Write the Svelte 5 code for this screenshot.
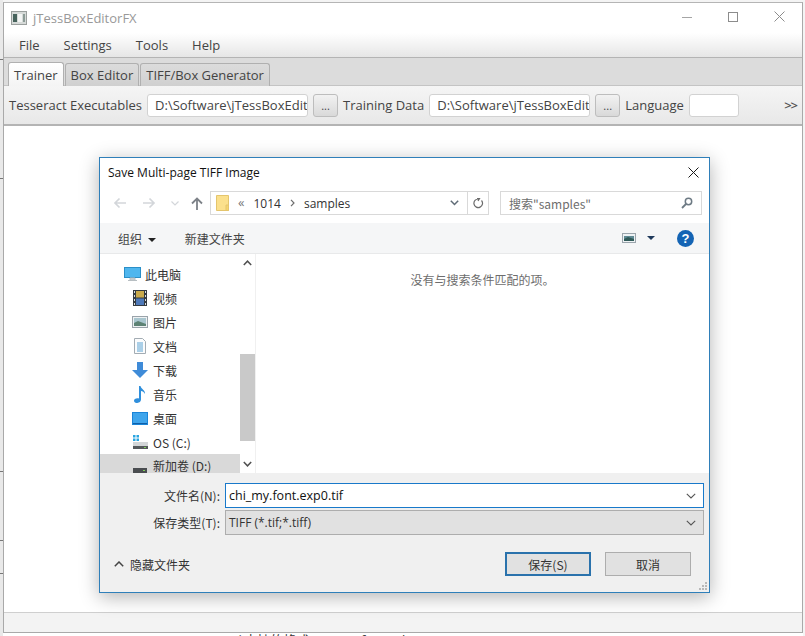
<script>
  const menus = ['File', 'Settings', 'Tools', 'Help']
  const tabs = ['Trainer', 'Box Editor', 'TIFF/Box Generator']
  const places = [
    { name: '视频', icon: 'video' },
    { name: '图片', icon: 'picture' },
    { name: '文档', icon: 'doc' },
    { name: '下载', icon: 'down' },
    { name: '音乐', icon: 'music' },
    { name: '桌面', icon: 'desk' },
    { name: 'OS (C:)', icon: 'os' },
    { name: '新加卷 (D:)', icon: 'drive', selected: true }
  ]
</script>

<div class="screen">
  <div class="edge">
    <i style="top:59px"></i><i style="top:178px"></i><i style="top:471px"></i><i style="top:540px"></i><i style="top:573px"></i>
  </div>
  <main class="win">
    <header class="titlebar">
      <svg class="appicon" width="16" height="14" viewBox="0 0 16 14">
        <rect x="0.5" y="0.5" width="15" height="13" fill="#d6dad8" stroke="#9a9f9d" />
        <rect x="2" y="3" width="4" height="8" fill="#47635c" />
        <rect x="7" y="3" width="4" height="8" fill="#f3f5f4" />
        <rect x="12" y="3" width="2" height="8" fill="#8b9b96" />
      </svg>
      <span class="apptitle">jTessBoxEditorFX</span>
      <div class="winbtns">
        <svg width="10" height="10" viewBox="0 0 10 10"><path d="M0 5.5h10" stroke="#a5a5a5" /></svg>
        <svg width="10" height="10" viewBox="0 0 10 10"><rect x="0.5" y="0.5" width="9" height="9" fill="none" stroke="#8c8c8c" /></svg>
        <svg width="11" height="11" viewBox="0 0 11 11"><path d="M.5.5l10 10M10.5.5l-10 10" stroke="#8c8c8c" fill="none" /></svg>
      </div>
    </header>
    <nav class="menubar">
      {#each menus as m}<span class="menu">{m}</span>{/each}
    </nav>
    <div class="tabstrip">
      {#each tabs as t, i}<span class="tab" class:active={i === 0}>{t}</span>{/each}
    </div>
    <div class="toolbar">
      <span>Tesseract Executables</span>
      <span class="field">D:\Software\jTessBoxEdito</span>
      <span class="dots">...</span>
      <span>Training Data</span>
      <span class="field">D:\Software\jTessBoxEdito</span>
      <span class="dots">...</span>
      <span>Language</span>
      <span class="field lang"></span>
      <span class="more">&gt;&gt;</span>
    </div>
    <div class="content"></div>
    <div class="status"></div>
  </main>
  <div class="peek"><span>✓ 支持的格式：.jpg .gif .png .bmp</span></div>

  <section class="dialog">
    <div class="dlgtitle">
      <span>Save Multi-page TIFF Image</span>
      <svg width="11" height="11" viewBox="0 0 11 11"><path d="M.5.5l10 10M10.5.5l-10 10" stroke="#1a1a1a" fill="none" /></svg>
    </div>
    <div class="navrow">
      <svg class="arrow" width="14" height="12" viewBox="0 0 14 12"><path d="M13 6H2M6.500 1.500L2 6l4.500 4.500" stroke="#d3d6da" stroke-width="1.700" fill="none" /></svg>
      <svg class="arrow fwd" width="14" height="12" viewBox="0 0 14 12"><path d="M1 6h11M7.500 1.500L12 6l-4.500 4.500" stroke="#d3d6da" stroke-width="1.700" fill="none" /></svg>
      <svg class="arrow small" width="8" height="5" viewBox="0 0 8 5"><path d="M.5.5L4 4 7.500.5" stroke="#d3d6da" stroke-width="1.200" fill="none" /></svg>
      <svg class="arrow up" width="12" height="13" viewBox="0 0 12 13"><path d="M6 13V2M1 6.500L6 1.500l5 5" stroke="#7d8288" stroke-width="1.800" fill="none" /></svg>
      <div class="address">
        <svg class="folder" width="13" height="16" viewBox="0 0 13 16">
          <path d="M.5.500h12v15H.5z" fill="#fbe08c" stroke="#e4c56d" />
          <path d="M10 10h2.500v5.500H10z" fill="#f6d56f" stroke="#e4c56d" />
        </svg>
        <span class="chev">«</span>
        <span>1014</span>
        <svg width="5" height="8" viewBox="0 0 5 8"><path d="M1 .8L4 4 1 7.200" stroke="#6d6d6d" stroke-width="1.200" fill="none" /></svg>
        <span>samples</span>
        <svg class="addrdown" width="9" height="6" viewBox="0 0 9 6"><path d="M.8.800L4.500 4.500 8.200.8" stroke="#5f6b76" stroke-width="1.500" fill="none" /></svg>
        <span class="refresh">
          <svg width="11" height="13" viewBox="0 0 11 13"><path d="M4 1.500h2.500L5 4M8.500 3.500a4.300 4.300 0 1 1-3-1.500" stroke="#6b6b6b" stroke-width="1.200" fill="none" /></svg>
        </span>
      </div>
      <div class="search">
        <span>搜索"samples"</span>
        <svg width="12" height="12" viewBox="0 0 12 12"><circle cx="7.500" cy="4.500" r="3.200" fill="none" stroke="#6d7a84" stroke-width="1.500" /><path d="M5 7L1 11" stroke="#6d7a84" stroke-width="1.800" /></svg>
      </div>
    </div>
    <div class="cmdbar">
      <span class="cmd">组织 <b class="caret"></b></span>
      <span class="cmd newf">新建文件夹</span>
      <span class="cmdright">
        <svg width="14" height="10" viewBox="0 0 14 10"><rect x=".5" y=".5" width="13" height="9" fill="#eef2f4" stroke="#9ba5ac" /><path d="M2 3h10v5H2z" fill="#5f8a94" /><path d="M2 6l4-2 6 2v2H2z" fill="#2f5a58" /></svg>
        <b class="caret dark"></b>
        <svg class="help" width="17" height="17" viewBox="0 0 17 17"><circle cx="8.500" cy="8.500" r="8.500" fill="#1464b4" /><text x="8.500" y="13" text-anchor="middle" font-size="13" font-weight="700" fill="#fff" font-family="Liberation Sans, sans-serif">?</text></svg>
      </span>
    </div>
    <div class="browser">
      <div class="tree">
        <div class="row pc">
          <svg width="17" height="15" viewBox="0 0 17 15"><rect x=".5" y=".5" width="16" height="10" fill="#4fb6ee" stroke="#2a8fc8" /><path d="M6 11h5v2H6zM4 13.500h9" fill="#cfd5d8" stroke="#b7bec2" /></svg>
          <span>此电脑</span>
        </div>
        {#each places as p}
          <div class="row" class:sel={p.selected}>
            <span class="ico">
              {#if p.icon === 'video'}
                <svg width="14" height="16" viewBox="0 0 14 16"><rect width="14" height="16" fill="#33393f" /><rect x="3" y="1" width="8" height="6.500" fill="#c9a94a" /><rect x="3" y="8.500" width="8" height="6.500" fill="#4d78b8" /><path d="M1 1h1v2H1zM1 5h1v2H1zM1 9h1v2H1zM1 13h1v2H1zM12 1h1v2h-1zM12 5h1v2h-1zM12 9h1v2h-1zM12 13h1v2h-1z" fill="#d8dce0" /></svg>
              {:else if p.icon === 'picture'}
                <svg width="16" height="12" viewBox="0 0 16 12"><rect x=".5" y=".5" width="15" height="11" fill="#eef1f3" stroke="#9aa3aa" /><rect x="2" y="2" width="12" height="8" fill="#a9c6cf" /><path d="M2 7l4-2 8 3v2H2z" fill="#5d8274" /></svg>
              {:else if p.icon === 'doc'}
                <svg width="12" height="16" viewBox="0 0 12 16"><path d="M.5.500h8l3 3v12H.5z" fill="#fbfcfd" stroke="#a3acb3" /><path d="M3 5h6M3 7h6M3 9h6M3 11h6M3 13h6" stroke="#5aa3d3" /></svg>
              {:else if p.icon === 'down'}
                <svg width="16" height="16" viewBox="0 0 16 16"><path d="M5 0h6v8h5l-8 8-8-8h5z" fill="#3f8bd8" /></svg>
              {:else if p.icon === 'music'}
                <svg width="12" height="17" viewBox="0 0 12 17"><path d="M5 0h1.500c.5 3 5 4 4.500 8-1-2-2.500-3-4-3v8.500C7 16 4.500 17 2.500 17 1 17 0 16 0 14.800 0 13 2 12 5 12.500z" fill="#2f8fdc" /></svg>
              {:else if p.icon === 'desk'}
                <svg width="16" height="13" viewBox="0 0 16 13"><rect width="16" height="13" fill="#1a84d8" /><rect x="1" y="1" width="14" height="10" fill="#3fa5ec" /><path d="M1 11h14v1H1z" fill="#0f5fa8" /></svg>
              {:else if p.icon === 'os'}
                <svg width="15" height="14" viewBox="0 0 15 14"><path d="M0 0h2.500v2.500H0zM3.500 0H6v2.500H3.500zM0 3.500h2.500V6H0zM3.500 3.500H6V6H3.500z" fill="#2aa5e0" /><rect y="7" width="15" height="7" fill="#d3d6d8" /><rect y="11" width="15" height="3" fill="#55595c" /><rect x="11" y="12" width="2" height="1" fill="#7fd05a" /></svg>
              {:else}
                <svg width="14" height="6" viewBox="0 0 14 6"><rect width="14" height="6" fill="#4a4d50" /><rect x="10" y="2" width="2" height="1" fill="#7fd05a" /></svg>
              {/if}
            </span>
            <span>{p.name}</span>
          </div>
        {/each}
      </div>
      <div class="sbar">
        <svg width="9" height="6" viewBox="0 0 9 6"><path d="M.8 5L4.500 1.200 8.200 5" stroke="#505050" stroke-width="1.500" fill="none" /></svg>
        <div class="thumbtrack"><div class="thumb"></div></div>
        <svg width="9" height="6" viewBox="0 0 9 6"><path d="M.8 1L4.500 4.800 8.200 1" stroke="#505050" stroke-width="1.500" fill="none" /></svg>
      </div>
      <div class="files">没有与搜索条件匹配的项。</div>
    </div>
    <div class="dlgfoot">
      <div class="formrow">
        <label for="fname">文件名(N):</label>
        <div class="combo focus">
          <input id="fname" value="chi_my.font.exp0.tif" />
          <svg width="10" height="6" viewBox="0 0 10 6"><path d="M.8.800L5 5 9.200.8" stroke="#555" stroke-width="1.100" fill="none" /></svg>
        </div>
      </div>
      <div class="formrow">
        <span class="lbl">保存类型(T):</span>
        <div class="combo grey">
          <span>TIFF (*.tif;*.tiff)</span>
          <svg width="10" height="6" viewBox="0 0 10 6"><path d="M.8.800L5 5 9.200.8" stroke="#555" stroke-width="1.100" fill="none" /></svg>
        </div>
      </div>
      <div class="actions">
        <span class="hide">
          <svg width="10" height="6" viewBox="0 0 10 6"><path d="M.8 5.200L5 1l4.200 4.200" stroke="#444" stroke-width="1.500" fill="none" /></svg>
          隐藏文件夹
        </span>
        <button class="btn default">保存(S)</button>
        <button class="btn">取消</button>
      </div>
      <svg class="grip" width="10" height="10" viewBox="0 0 10 10"><path d="M7 0h2v2H7zM4 3h2v2H4zM7 3h2v2H7zM1 6h2v2H1zM4 6h2v2H4zM7 6h2v2H7z" fill="#b8b8b8" /></svg>
    </div>
  </section>
</div>

<style>
  :global(body) {
    margin: 0;
    background: #fff;
  }
  .screen {
    position: relative;
    width: 805px;
    height: 636px;
    overflow: hidden;
    font-family: "Open Sans", "Noto Sans CJK SC", sans-serif;
    font-size: 13px;
    color: #333;
    background: #f4f4f4;
  }
  .edge {
    position: absolute;
    left: 0;
    top: 0;
    width: 3px;
    height: 636px;
    background: #e9e9e9;
  }
  .edge i {
    position: absolute;
    left: 0;
    width: 3px;
    height: 1px;
    background: #777;
  }
  .win {
    margin: 2px 2px 0 3px;
    height: 631px;
    box-sizing: border-box;
    border: 1px solid #a9a9a9;
    border-top-color: #b5b5b5;
    border-left-width: 1px;
    background: #fff;
    display: flex;
    flex-direction: column;
  }
  .titlebar {
    height: 30px;
    flex: none;
    display: flex;
    align-items: center;
    padding-left: 7px;
    background: #fff;
  }
  .appicon {
    margin-right: 6px;
  }
  .apptitle {
    font-size: 13px;
    color: #999;
  }
  .winbtns {
    margin-left: auto;
    display: flex;
    align-items: center;
    gap: 36px;
    padding-right: 17px;
    padding-bottom: 3px;
  }
  .menubar {
    height: 24px;
    flex: none;
    display: flex;
    align-items: center;
    gap: 24px;
    padding-left: 15px;
    background: linear-gradient(#fff, #e6e6e6);
    border-bottom: 1px solid #b4b4b4;
    color: #444;
  }
  .tabstrip {
    height: 28px;
    flex: none;
    box-sizing: border-box;
    background: #dcdcdc;
    display: flex;
    align-items: flex-end;
    gap: 1px;
    padding-left: 4px;
    border-bottom: 1px solid #c4c4c4;
  }
  .tab {
    height: 23px;
    box-sizing: border-box;
    padding: 0 5px;
    display: flex;
    align-items: center;
    background: linear-gradient(#dcdcdc, #d0d0d0);
    border: 1px solid #b0b0b0;
    border-bottom: 0;
    border-radius: 3px 3px 0 0;
    color: #444;
    margin-bottom: -1px;
  }
  .tab.active {
    background: linear-gradient(#fff, #f4f4f4);
    height: 24px;
    position: relative;
  }
  .toolbar {
    height: 40px;
    flex: none;
    box-sizing: border-box;
    display: flex;
    align-items: center;
    gap: 5px;
    padding-left: 5px;
    background: linear-gradient(#f5f5f5, #e8e8e8);
    border-bottom: 2px solid #b4b4b4;
    color: #444;
  }
  .field {
    width: 161px;
    height: 23px;
    box-sizing: border-box;
    padding: 0 7px;
    background: #fff;
    border: 1px solid #d2d2d2;
    border-radius: 3px;
    display: flex;
    align-items: center;
    overflow: hidden;
    white-space: nowrap;
    margin-left: 0;
  }
  .field.lang {
    width: 50px;
  }
  .dots {
    width: 25px;
    height: 23px;
    box-sizing: border-box;
    border: 1px solid #bdbdbd;
    border-radius: 3px;
    background: linear-gradient(#f2f2f2, #d9d9d9);
    display: flex;
    align-items: center;
    justify-content: center;
    font-size: 11px;
  }
  .more {
    margin-left: auto;
    margin-right: 5px;
    font-size: 13px;
    font-weight: 600;
    color: #555;
    letter-spacing: -1px;
  }
  .content {
    flex: 1;
    background: #fff;
  }
  .status {
    height: 19px;
    flex: none;
    border-top: 1px solid #cfcfcf;
    background: #f3f3f3;
  }
  .peek {
    position: absolute;
    left: 3px;
    right: 2px;
    top: 633px;
    height: 3px;
    overflow: hidden;
    background: #fff;
    font-size: 13px;
    line-height: 0;
    color: #333;
  }
  .peek span {
    position: absolute;
    left: 229px;
    top: 0;
    line-height: 14px;
    white-space: nowrap;
  }

  .dialog {
    position: absolute;
    left: 99px;
    top: 157px;
    width: 611px;
    height: 436px;
    box-sizing: border-box;
    border: 1px solid #2f7fb9;
    background: #fff;
    box-shadow: 0 4px 18px rgba(0, 0, 0, 0.3);
    display: flex;
    flex-direction: column;
    font-family: "Noto Sans CJK SC", "Open Sans", sans-serif;
    font-size: 12px;
    color: #333;
  }
  .dlgtitle {
    height: 29px;
    flex: none;
    display: flex;
    align-items: center;
    justify-content: space-between;
    padding: 0 10px 0 8px;
    font-family: "Open Sans", sans-serif;
    font-size: 12px;
    color: #111;
  }
  .navrow {
    height: 36px;
    flex: none;
    display: flex;
    align-items: center;
    padding-left: 13px;
    padding-bottom: 4px;
    box-sizing: border-box;
  }
  .arrow {
    margin-right: 15px;
  }
  .arrow.small {
    margin-right: 12px;
  }
  .arrow.up {
    margin-right: 7px;
  }
  .address {
    width: 279px;
    height: 24px;
    box-sizing: border-box;
    border: 1px solid #d9d9d9;
    display: flex;
    align-items: center;
    gap: 9px;
    padding-left: 5px;
    font-family: "Open Sans", sans-serif;
    font-size: 12px;
  }
  .chev {
    color: #777;
    font-size: 13px;
    margin-bottom: 2px;
  }
  .addrdown {
    margin-left: auto;
    margin-right: -1px;
  }
  .refresh {
    width: 20px;
    height: 100%;
    border-left: 1px solid #d9d9d9;
    display: flex;
    align-items: center;
    justify-content: center;
  }
  .search {
    margin-left: 11px;
    width: 202px;
    height: 24px;
    box-sizing: border-box;
    border: 1px solid #d9d9d9;
    display: flex;
    align-items: center;
    justify-content: space-between;
    padding: 0 8px;
    color: #6d6d6d;
  }
  .cmdbar {
    height: 31px;
    flex: none;
    box-sizing: border-box;
    background: #f5f6f7;
    border-bottom: 1px solid #e8e9ea;
    display: flex;
    align-items: center;
    padding-left: 18px;
    color: #444;
  }
  .caret {
    display: inline-block;
    width: 0;
    height: 0;
    border: 4px solid transparent;
    border-top: 4px solid #222;
    border-bottom: 0;
    margin-left: 3px;
    vertical-align: 2px;
  }
  .caret.dark {
    border-top-color: #1e395b;
    margin-left: 0;
  }
  .newf {
    margin-left: 29px;
  }
  .cmdright {
    margin-left: auto;
    display: flex;
    align-items: center;
    gap: 11px;
    padding-right: 15px;
  }
  .help {
    margin-left: 11px;
  }
  .browser {
    flex: 1;
    min-height: 0;
    display: flex;
    overflow: hidden;
  }
  .tree {
    width: 140px;
    flex: none;
    padding-top: 8px;
    box-sizing: border-box;
  }
  .row {
    height: 24px;
    display: flex;
    align-items: center;
    padding-left: 53px;
    position: relative;
    color: #333;
    white-space: nowrap;
  }
  .row.pc {
    padding-left: 45px;
  }
  .row.pc svg {
    position: absolute;
    left: 24px;
    top: 5px;
  }
  .row .ico {
    position: absolute;
    left: 32px;
    width: 16px;
    display: flex;
    justify-content: center;
  }
  .row.sel {
    background: #d9d9d9;
  }
  .row.sel span:last-child {
    position: relative;
    top: -1px;
  }
  .row.sel .ico {
    top: 14px;
  }
  .sbar {
    width: 16px;
    flex: none;
    display: flex;
    flex-direction: column;
    align-items: center;
    padding: 6px 0;
    box-sizing: border-box;
    border-right: 1px solid #f0f0f0;
    justify-content: space-between;
  }
  .thumbtrack {
    flex: 1;
    width: 100%;
    margin: 5px 0;
    padding-top: 83px;
    box-sizing: border-box;
  }
  .thumb {
    height: 87px;
    background: #c9c9c9;
  }
  .files {
    flex: 1;
    text-align: center;
    padding-top: 17px;
    color: #6d6d6d;
  }
  .dlgfoot {
    height: 119px;
    flex: none;
    position: relative;
    background: #f0f0f0;
    padding-top: 10px;
    box-sizing: border-box;
  }
  .formrow {
    display: flex;
    align-items: center;
    height: 25px;
    margin-bottom: 2px;
  }
  .formrow label,
  .lbl {
    width: 120px;
    text-align: right;
    margin-right: 5px;
  }
  .combo {
    width: 479px;
    height: 25px;
    box-sizing: border-box;
    display: flex;
    align-items: center;
    justify-content: space-between;
    padding: 0 7px 0 3px;
  }
  .combo.focus {
    border: 1px solid #1979ca;
    background: #fff;
  }
  .combo.focus input {
    border: 0;
    outline: 0;
    padding: 0;
    flex: 1;
    background: transparent;
    font-family: "Open Sans", sans-serif;
    font-size: 12.500px;
    color: #111;
  }
  .combo.grey {
    border: 1px solid #adadad;
    background: #e1e1e1;
    font-family: "Open Sans", sans-serif;
    font-size: 12px;
  }
  .actions {
    display: flex;
    align-items: center;
    margin-top: 17px;
    padding-left: 14px;
    height: 24px;
  }
  .hide {
    display: flex;
    align-items: center;
    gap: 6px;
    margin-right: auto;
    color: #333;
  }
  .btn {
    width: 86px;
    height: 24px;
    box-sizing: border-box;
    border: 1px solid #adadad;
    background: #e1e1e1;
    padding: 0;
    font-family: "Noto Sans CJK SC", "Open Sans", sans-serif;
    font-size: 12px;
    color: #333;
    margin-right: 18px;
  }
  .btn.default {
    border: 2px solid #2a72ac;
    margin-right: 14px;
  }
  .grip {
    position: absolute;
    right: 1px;
    bottom: 0;
  }
</style>
